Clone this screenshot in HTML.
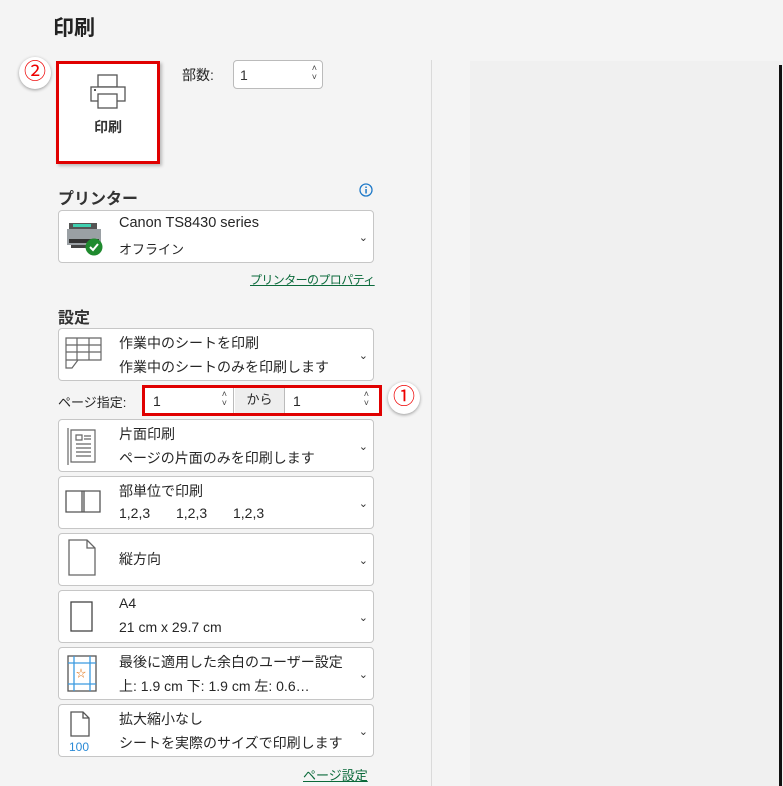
<!DOCTYPE html>
<html><head><meta charset="utf-8"><style>
*{margin:0;padding:0;box-sizing:border-box}
body{width:783px;height:786px;background:#f4f4f4;font-family:"Liberation Sans","Noto Sans CJK JP",sans-serif;color:#262626;position:relative;overflow:hidden}
.a{position:absolute}
.box{position:absolute;left:58px;width:316px;height:53px;background:#fff;border:1px solid #c6c6c6;border-radius:4px}
.box .t1{position:absolute;left:60px;top:4px;font-size:14px}
.box .t2{position:absolute;left:60px;top:28px;font-size:14px}
.chev{position:absolute;right:5px;top:20px;font-size:11px;color:#333}
.ic{position:absolute;left:6px;top:6px}
h2{position:absolute;font-size:16px;font-weight:bold;color:#333}
.lnk{position:absolute;font-size:13px;color:#0b6a3b;text-decoration:underline;white-space:nowrap}
.spin{position:absolute;font-size:9px;line-height:9px;color:#444;text-align:center}
.circ{position:absolute;width:32px;height:32px;border-radius:50%;background:#fff;box-shadow:0 1px 3px #999;color:#e00;font-size:22px;text-align:center;line-height:30px}
</style></head><body>
<div class="a" style="left:53px;top:12px;font-size:21px;font-weight:bold;color:#222">印刷</div>
<div class="a" style="left:431px;top:60px;width:1px;height:726px;background:#dadada"></div>
<div class="a" style="left:470px;top:61px;width:313px;height:725px;background:#f0f0f0"></div>
<div class="a" style="left:779px;top:65px;width:3px;height:721px;background:#111"></div>

<div class="circ" style="left:19px;top:57px">②</div>
<div class="a" style="left:56px;top:61px;width:104px;height:103px;background:#fff;border:3px solid #e00000;box-shadow:2px 2px 3px #bbb"></div>
<svg class="a" style="left:89px;top:74px" width="40" height="40" viewBox="0 0 40 40" fill="#fff" stroke="#555" stroke-width="1.3"><rect x="9" y="1" width="19" height="12"/><rect x="2" y="13" width="34" height="14"/><rect x="9" y="20" width="19" height="14"/><rect x="5" y="15" width="2" height="2" fill="#555" stroke="none"/></svg>
<div class="a" style="left:94px;top:117px;font-size:14px;font-weight:bold;color:#333">印刷</div>

<div class="a" style="left:182px;top:65px;font-size:14px">部数:</div>
<div class="a" style="left:233px;top:60px;width:90px;height:29px;background:#fff;border:1px solid #bbb;border-radius:4px"><span class="a" style="left:6px;top:6px;font-size:14px;color:#333">1</span><div class="spin" style="right:5px;top:3px">˄<br>˅</div></div>

<h2 style="left:58px;top:185px">プリンター</h2>
<svg class="a" style="left:359px;top:183px" width="14" height="14"><circle cx="7" cy="7" r="6" fill="none" stroke="#1e79c8" stroke-width="1.3"/><rect x="6.3" y="6" width="1.5" height="4.5" fill="#1e79c8"/><rect x="6.3" y="3.5" width="1.5" height="1.5" fill="#1e79c8"/></svg>
<div class="box" style="top:210px;height:53px">
<svg class="ic" style="top:10px" width="40" height="36"><rect x="4" y="2" width="28" height="6" fill="#555"/><rect x="8" y="3" width="18" height="3" fill="#3fd0b0"/><rect x="2" y="8" width="34" height="16" fill="#9aa0a4"/><rect x="4" y="18" width="30" height="4" fill="#333"/><rect x="6" y="24" width="20" height="3" fill="#444"/><circle cx="29" cy="26" r="8.5" fill="#1f8a2e"/><path d="M25 26l3 3 5-6" stroke="#fff" stroke-width="2" fill="none"/></svg>
<div class="t1" style="font-size:14.5px">Canon TS8430 series</div><div class="t2" style="font-size:13px">オフライン</div><div class="chev">⌄</div></div>
<div class="lnk" style="left:250px;top:271px;font-size:12px;letter-spacing:-0.6px">プリンターのプロパティ</div>

<h2 style="left:58px;top:304px">設定</h2>
<div class="box" style="top:328px">
<svg class="ic" style="left:6px;top:8px" width="40" height="36" stroke="#666" fill="none" stroke-width="1.2"><path d="M1 1h35v22H1zM1 8h35M1 15h35M12 1v22M24 1v22M1 23v8h6l6-8"/></svg>
<div class="t1">作業中のシートを印刷</div><div class="t2">作業中のシートのみを印刷します</div><div class="chev">⌄</div></div>

<div class="a" style="left:58px;top:392px;font-size:13px">ページ指定:</div>
<div class="a" style="left:142px;top:385px;width:240px;height:31px;border:3px solid #e00000;background:#fff"></div>
<div class="a" style="left:145px;top:388px;width:89px;height:25px;background:#fff;border-right:1px solid #bbb"><span class="a" style="left:8px;top:5px;font-size:14px">1</span><div class="spin" style="right:6px;top:2px">˄<br>˅</div></div>
<div class="a" style="left:235px;top:388px;width:49px;height:25px;background:#eee;font-size:13px;text-align:center;line-height:24px">から</div>
<div class="a" style="left:284px;top:388px;width:91px;height:25px;background:#fff;border-left:1px solid #bbb"><span class="a" style="left:8px;top:5px;font-size:14px">1</span><div class="spin" style="right:6px;top:2px">˄<br>˅</div></div>
<div class="circ" style="left:388px;top:382px">①</div>

<div class="box" style="top:419px">
<svg class="ic" style="left:8px;top:7px" width="32" height="38" stroke="#666" fill="none" stroke-width="1.2"><path d="M4 3h24v32H4zM1 1v37M9 8h6v5H9zM17 9h7M17 12h7M9 17h15M9 21h15M9 25h15M9 29h15"/></svg>
<div class="t1">片面印刷</div><div class="t2">ページの片面のみを印刷します</div><div class="chev">⌄</div></div>

<div class="box" style="top:476px">
<svg class="ic" style="left:6px;top:13px" width="36" height="24" stroke="#555" fill="none" stroke-width="1.3"><path d="M1 1h34v21H1zM17 1v21M19 1v21"/></svg>
<div class="t1">部単位で印刷</div><div class="t2" style="left:60px">1,2,3</div><div class="t2" style="left:117px">1,2,3</div><div class="t2" style="left:174px">1,2,3</div><div class="chev">⌄</div></div>

<div class="box" style="top:533px">
<svg class="ic" style="left:9px;top:5px" width="30" height="40" stroke="#666" fill="none" stroke-width="1.3"><path d="M1 1h18l8 8v27H1zM19 1v8h8"/></svg>
<div class="t1" style="top:15px">縦方向</div><div class="chev">⌄</div></div>

<div class="box" style="top:590px">
<svg class="ic" style="left:11px;top:10px" width="26" height="32" stroke="#444" fill="none" stroke-width="1.3"><rect x="1" y="1" width="21" height="29"/></svg>
<div class="t1">A4</div><div class="t2">21 cm x 29.7 cm</div><div class="chev">⌄</div></div>

<div class="box" style="top:647px">
<svg class="ic" style="left:8px;top:7px" width="30" height="38"><rect x="1" y="1" width="28" height="35" fill="#fff" stroke="#555" stroke-width="1.3"/><path d="M7 1v35M23 1v35M1 8h28M1 29h28" stroke="#3a9ae0" stroke-width="1.3"/><text x="9" y="22" font-size="10" fill="#e07010">☆</text></svg>
<div class="t1">最後に適用した余白のユーザー設定</div><div class="t2">上: 1.9 cm 下: 1.9 cm 左: 0.6…</div><div class="chev">⌄</div></div>

<div class="box" style="top:704px">
<svg class="ic" style="left:8px;top:5px" width="34" height="44"><path d="M4 2h12l6 6v18H4zM16 2v6h6" stroke="#555" fill="none" stroke-width="1.3"/><text x="2" y="41" font-size="12" fill="#2a8ad6" font-family="Liberation Sans">100</text></svg>
<div class="t1">拡大縮小なし</div><div class="t2">シートを実際のサイズで印刷します</div><div class="chev">⌄</div></div>
<div class="lnk" style="left:303px;top:765px">ページ設定</div>
</body></html>
